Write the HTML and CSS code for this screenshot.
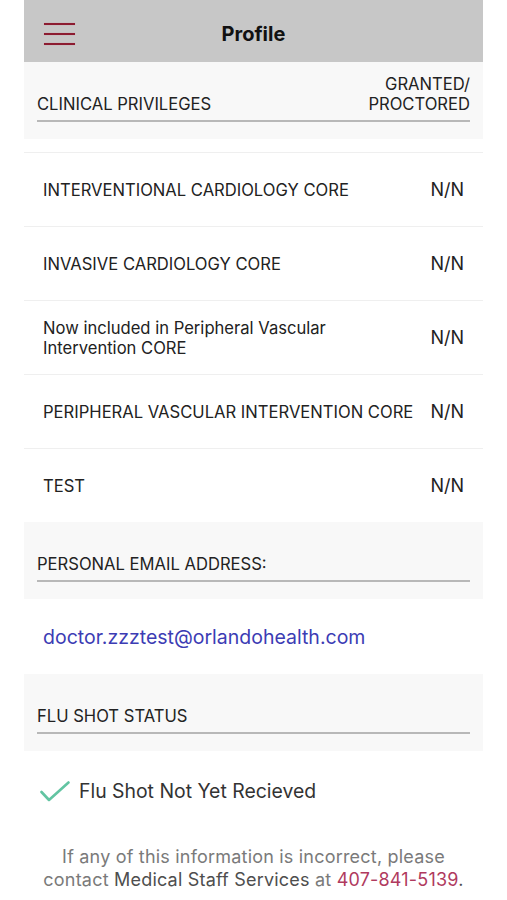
FILE: index.html
```html
<!DOCTYPE html>
<html lang="en">
<head>
    <meta charset="UTF-8">
    <meta name="viewport" content="width=device-width, initial-scale=1.0">
    <title>Profile</title>
    <link rel="stylesheet" href="styles.css">
</head>
<body>
    <div class="screen">
        <!-- top bar -->
        <div class="topbar">
            <a class="menu" href="javascript:;">
                <span></span><span></span><span></span>
            </a>
            <h1 class="title">Profile</h1>
            <div></div>
        </div>

        <!-- privileges -->
        <div class="sec-head">
            <div class="sec-line">
                <span>CLINICAL PRIVILEGES</span>
                <span class="sec-right">GRANTED/<br>PROCTORED</span>
            </div>
        </div>
        <ul class="priv-list">
            <li><span>INTERVENTIONAL CARDIOLOGY CORE</span><span class="val">N/N</span></li>
            <li><span>INVASIVE CARDIOLOGY CORE</span><span class="val">N/N</span></li>
            <li><span class="small">Now included in Peripheral Vascular<br>Intervention CORE</span><span class="val">N/N</span></li>
            <li><span>PERIPHERAL VASCULAR INTERVENTION CORE</span><span class="val">N/N</span></li>
            <li><span>TEST</span><span class="val">N/N</span></li>
        </ul>

        <!-- email -->
        <div class="sec-head">
            <div class="sec-line">
                <span>PERSONAL EMAIL ADDRESS:</span>
            </div>
        </div>
        <div class="email-row">
            <a href="javascript:;">doctor.zzztest@orlandohealth.com</a>
        </div>

        <!-- flu shot -->
        <div class="sec-head">
            <div class="sec-line">
                <span>FLU SHOT STATUS</span>
            </div>
        </div>
        <div class="flu-row">
            <svg class="check" width="30" height="21" viewBox="0 0 30 21">
                <polyline points="1.5,11 9,19 28.5,1.5" fill="none" stroke="#62c4a2" stroke-width="2.6" stroke-linecap="round" stroke-linejoin="round"/>
            </svg>
            <span>Flu Shot Not Yet Recieved</span>
        </div>

        <p class="note">
            If any of this information is incorrect, please<br>
            contact <span class="dark">Medical Staff Services</span> at <a href="javascript:;">407-841-5139</a><span class="dark">.</span>
        </p>
    </div>
</body>
</html>
```

FILE: styles.css
```css
*{
    margin: 0;
    padding: 0;
}
body{
    background-color: #fff;
    font-family: "Inter", "Liberation Sans", Arial, sans-serif;
    color: #222;
}
.screen{
    width: 459px;
    margin: 0 auto;
}
.topbar{
    height: 62px;
    box-sizing: border-box;
    padding-top: 6px;
    background-color: #c7c7c7;
    display: grid;
    grid-template-columns: 1fr auto 1fr;
    align-items: center;
}
.menu{
    display: flex;
    flex-direction: column;
    gap: 8px;
    width: 31px;
    margin-left: 20px;
}
.menu span{
    display: block;
    height: 2px;
    background-color: #8c1c31;
    box-shadow: 0 0 1px #d57b8b;
}
.title{
    font-size: 20px;
    font-weight: 700;
    color: #111;
}
.sec-head{
    height: 77px;
    box-sizing: border-box;
    padding: 0 13px 17px;
    background-color: #f8f8f8;
    display: flex;
    flex-direction: column;
    justify-content: flex-end;
}
.sec-line{
    display: flex;
    justify-content: space-between;
    align-items: flex-end;
    padding-bottom: 6px;
    border-bottom: 2px solid #b8b8b8;
    font-size: 16.6px;
    line-height: 20px;
    color: #222;
}
.sec-right{
    text-align: right;
}
.priv-list{
    list-style: none;
    margin-top: 13px;
}
.priv-list li{
    min-height: 73px;
    border-top: 1px solid #efefef;
    padding: 0 19px;
    display: flex;
    justify-content: space-between;
    align-items: center;
    gap: 12px;
    font-size: 16.6px;
    line-height: 20px;
}
.priv-list .val{
    font-size: 18px;
}
.email-row{
    height: 75px;
    padding-left: 19px;
    display: flex;
    align-items: center;
}
.email-row a{
    color: #3c3cb4;
    text-decoration: none;
    font-size: 19.5px;
}
.flu-row{
    height: 80px;
    padding-left: 16px;
    display: flex;
    align-items: center;
    gap: 9px;
    font-size: 19.4px;
    color: #333;
}
.note{
    padding-top: 14px;
    text-align: center;
    font-size: 18px;
    line-height: 23px;
    letter-spacing: 0.2px;
    color: #7a7a7a;
}
.note .dark{
    color: #4e4e4e;
}
.note a{
    color: #b03a5e;
    text-decoration: none;
}
```
